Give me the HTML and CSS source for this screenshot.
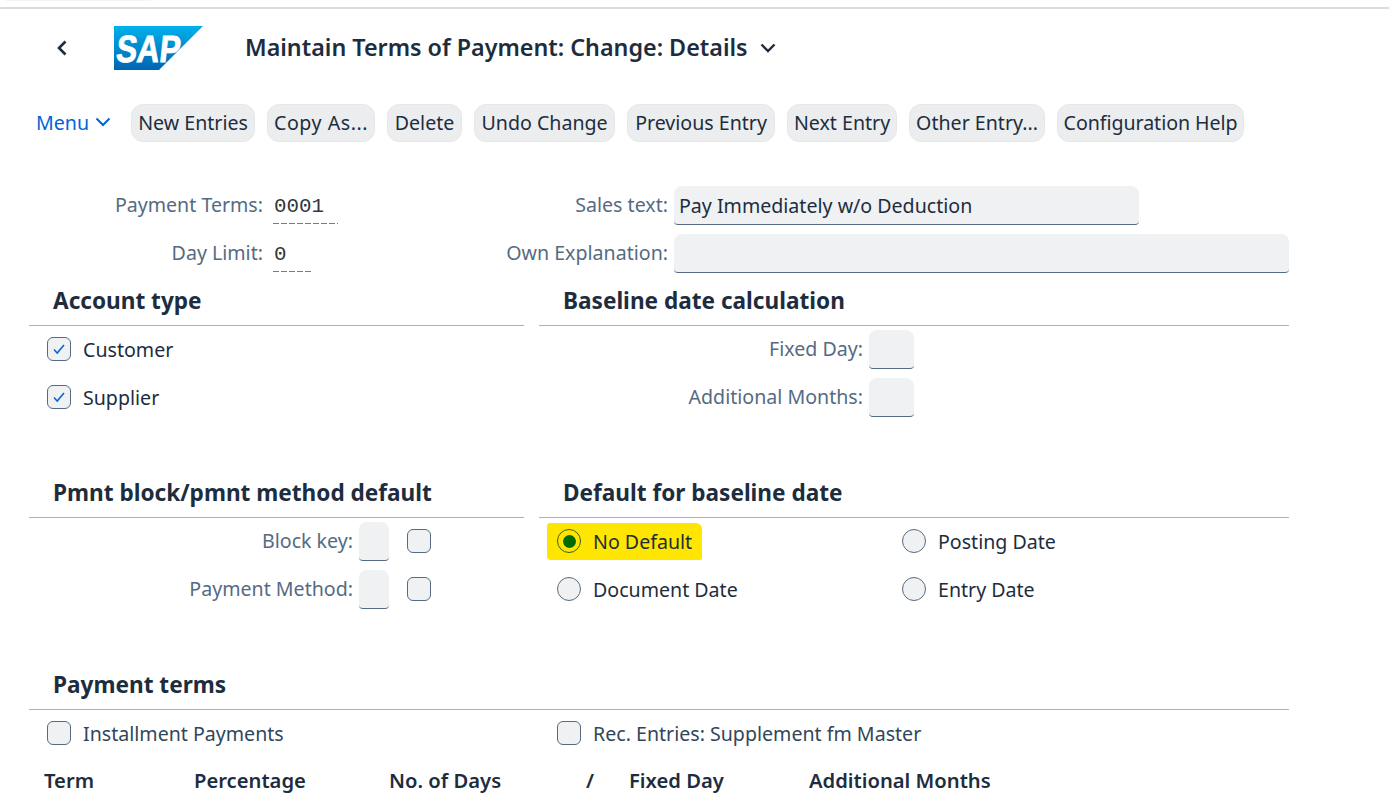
FILE: index.html
```html
<!DOCTYPE html>
<html lang="en">
<head>
<meta charset="utf-8">
<title>Maintain Terms of Payment</title>
<link rel="stylesheet" href="styles.css">
</head>
<body>
<div class="topline"><div class="topfaint"></div></div>
<header class="titlebar">
  <svg class="back" width="12" height="18" viewBox="0 0 12 18"><path d="M9.500 2.500 3 9l6.500 6.500" fill="none" stroke="#1d2d3e" stroke-width="2.600"/></svg>
  <svg class="logo" width="89" height="44" viewBox="0 0 89 44">
    <defs><linearGradient id="sapg" x1="0" y1="0" x2="0" y2="1"><stop offset="0" stop-color="#00b1eb"/><stop offset="1" stop-color="#0064b1"/></linearGradient></defs>
    <path d="M0 0H89L45 44H0Z" fill="url(#sapg)"/>
    <text class="logotext" x="5" y="36" textLength="64" lengthAdjust="spacingAndGlyphs" transform="skewX(-6)">SAP</text>
  </svg>
  <h1 class="pagetitle">Maintain Terms of Payment: Change: Details</h1>
  <svg class="titlechev" width="18" height="10" viewBox="0 0 18 10"><path d="M2.500 1.500 9 8l6.500-6.500" fill="none" stroke="#1d2d3e" stroke-width="2.400"/></svg>
</header>
<nav class="toolbar">
  <span class="menu">Menu <svg width="16" height="10" viewBox="0 0 16 10"><path d="M1.500 1.500 8 8l6.500-6.500" fill="none" stroke="#0064d9" stroke-width="2"/></svg></span>
  <button class="btn btn-new">New Entries</button>
  <button class="btn btn-copy">Copy As...</button>
  <button class="btn btn-del">Delete</button>
  <button class="btn btn-undo">Undo Change</button>
  <button class="btn btn-prev">Previous Entry</button>
  <button class="btn btn-next">Next Entry</button>
  <button class="btn btn-other">Other Entry...</button>
  <button class="btn btn-help">Configuration Help</button>
</nav>
<main class="form">
  <div class="panels">
    <section class="panel panel-left">
      <div class="row"><label class="lbl lbl-a">Payment Terms:</label><span class="mono mono-4">0001</span></div>
      <div class="row"><label class="lbl lbl-a">Day Limit:</label><span class="mono mono-1">0</span></div>
      <h2 class="sec">Account type</h2>
      <div class="row check"><span class="cb"><svg width="14" height="12" viewBox="0 0 14 12"><path d="M2 6.500 5.200 10 12 2" fill="none" stroke="#0064d9" stroke-width="1.500"/></svg></span>Customer</div>
      <div class="row check"><span class="cb"><svg width="14" height="12" viewBox="0 0 14 12"><path d="M2 6.500 5.200 10 12 2" fill="none" stroke="#0064d9" stroke-width="1.500"/></svg></span>Supplier</div>
      <div class="row"></div>
      <h2 class="sec">Pmnt block/pmnt method default</h2>
      <div class="row"><label class="lbl lbl-b">Block key:</label><span class="inp inp-s"></span><span class="cb cb-gap"></span></div>
      <div class="row"><label class="lbl lbl-b">Payment Method:</label><span class="inp inp-s"></span><span class="cb cb-gap"></span></div>
      <div class="row"></div>
    </section>
    <section class="panel panel-right">
      <div class="row"><label class="lbl lbl-c">Sales text:</label><span class="inp inp-l">Pay Immediately w/o Deduction</span></div>
      <div class="row"><label class="lbl lbl-c">Own Explanation:</label><span class="inp inp-x"></span></div>
      <h2 class="sec">Baseline date calculation</h2>
      <div class="row"><label class="lbl lbl-d">Fixed Day:</label><span class="inp inp-m"></span></div>
      <div class="row"><label class="lbl lbl-d">Additional Months:</label><span class="inp inp-m"></span></div>
      <div class="row"></div>
      <h2 class="sec">Default for baseline date</h2>
      <div class="radios">
        <div class="row radio-row"><span class="hl"><span class="rb rb-on"></span>No Default</span></div>
        <div class="row radio-row"><span class="rb"></span>Posting Date</div>
        <div class="row radio-row"><span class="rb"></span>Document Date</div>
        <div class="row radio-row"><span class="rb"></span>Entry Date</div>
      </div>
      <div class="row"></div>
    </section>
  </div>
  <h2 class="sec sec-full">Payment terms</h2>
  <div class="row-two">
    <div class="row check"><span class="cb"></span>Installment Payments</div>
    <div class="row check"><span class="cb"></span>Rec. Entries: Supplement fm Master</div>
  </div>
  <div class="thead">
    <span class="th th-term">Term</span>
    <span class="th th-pct">Percentage</span>
    <span class="th th-days">No. of Days</span>
    <span class="th th-slash">/</span>
    <span class="th th-fix">Fixed Day</span>
    <span class="th">Additional Months</span>
  </div>
</main>
</body>
</html>
```
FILE: styles.css
```css
* { box-sizing: border-box; }
html, body { height: 795px; overflow: hidden; }
body {
  margin: 0;
  background: #fff;
  color: #1d2d3e;
  font-family: "Noto Sans", "Open Sans", sans-serif;
  font-size: 19.6px;
}
.topline { height: 9px; border-bottom: 2px solid #dcdcdc; }
.topfaint { width: 145px; height: 1px; margin-left: 6px; background: #f4f4f4; }
.titlebar {
  height: 78px;
  padding-left: 56px;
  display: flex;
  align-items: center;
}
.back { margin-right: 46px; }
.logo { margin-right: 42px; }
.logotext { font: 700 38px "Liberation Sans", sans-serif; fill: #fff; stroke: #fff; stroke-width: 1px; }
.pagetitle { margin: 0 11px 0 0; font-size: 23.3px; font-weight: 600; line-height: 1; }
.toolbar {
  height: 56px;
  margin-top: 8px;
  padding-left: 36px;
  display: flex;
  align-items: center;
  gap: 12px;
}
.menu { color: #0064d9; margin-right: 7px; padding-bottom: 2px; display: flex; align-items: center; gap: 6px; }
.btn {
  height: 38px;
  padding: 0 0 2px;
  flex: none;
  font: inherit;
  color: inherit;
  background: #ebedef;
  border: 1px solid #e5e7ea;
  border-radius: 12px;
  white-space: nowrap;
}
.btn-new { width: 124px; margin-left: 1px; }
.btn-copy { width: 108px; letter-spacing: 0.55px; }
.btn-del { width: 75px; }
.btn-undo { width: 141px; }
.btn-prev { width: 148px; }
.btn-next { width: 110px; }
.btn-other { width: 136px; }
.btn-help { width: 187px; letter-spacing: -0.05px; }
.form { width: 1289px; margin-top: 30px; padding-left: 29px; }
.panels { display: flex; gap: 15px; }
.panel-left { width: 495px; flex: none; }
.panel-right { flex: 1; }
.row { height: 48px; display: flex; align-items: center; }
.sec {
  height: 49px;
  margin: 0 0 -1px;
  padding: 0 0 1px 24px;
  display: flex;
  align-items: center;
  font-size: 22.6px;
  font-weight: 700;
  border-bottom: 1px solid #a8b2bd;
}
.lbl { color: #556b82; text-align: right; flex: none; white-space: nowrap; padding-bottom: 2px; }
.lbl-a { width: 234px; margin-right: 10px; }
.lbl-b { width: 324px; margin-right: 6px; }
.lbl-c { width: 163px; margin-left: -34px; margin-right: 6px; }
.lbl-d { width: 324px; margin-right: 6px; }
.mono {
  font-family: "Liberation Mono", monospace;
  font-size: 20.800px;
  height: 38px;
  padding: 9px 0 0 1px;
  color: #32363a;
  background: repeating-linear-gradient(90deg, #6a7f94 0 6px, transparent 6px 8px) left bottom / 100% 1px no-repeat;
}
.mono-4 { width: 65px; }
.mono-1 { width: 38px; }
.inp {
  height: 39px;
  flex: none;
  display: block;
  padding: 6px 5px;
  background: #eff1f2;
  border-bottom: 1px solid #556b82;
  border-radius: 8px 8px 4px 4px;
}
.inp-s { width: 30px; }
.inp-m { width: 45px; }
.inp-l { width: 465px; }
.inp-x { width: 615px; }
.check { padding-left: 18px; }
.cb {
  width: 24px;
  height: 24px;
  flex: none;
  margin-right: 12px;
  display: inline-flex;
  align-items: center;
  justify-content: center;
  background: #eff1f2;
  border: 1px solid #556b82;
  border-radius: 6px;
}
.cb-gap { margin: 0 0 0 18px; }
.radios { display: grid; grid-template-columns: 345px 1fr; }
.radio-row { padding-left: 18px; }
.rb {
  width: 24px;
  height: 24px;
  flex: none;
  margin-right: 12px;
  background: #eff1f2;
  border: 1.500px solid #556b82;
  border-radius: 50%;
}
.rb-on {
  background: #046a00 content-box;
  padding: 4.500px;
  border-color: #3f5a22;
}
.hl {
  height: 37px;
  margin-left: -10px;
  padding: 0 10px;
  display: flex;
  align-items: center;
  background: #ffe600;
  border-radius: 3px 6px 2px 4px;
}
.sec-full { width: 1260px; }
.row-two { display: flex; gap: 15px; }
.row-two .row { width: 495px; flex: none; }
.row-two .check { color: #32465a; }
.thead { height: 48px; padding: 0 0 2px 15px; display: flex; align-items: center; }
.th { font-weight: 600; font-size: 20.2px; }
.th-term { width: 150px; }
.th-pct { width: 195px; }
.th-days { width: 197px; }
.th-slash { width: 43px; }
.th-fix { width: 180px; }
```
